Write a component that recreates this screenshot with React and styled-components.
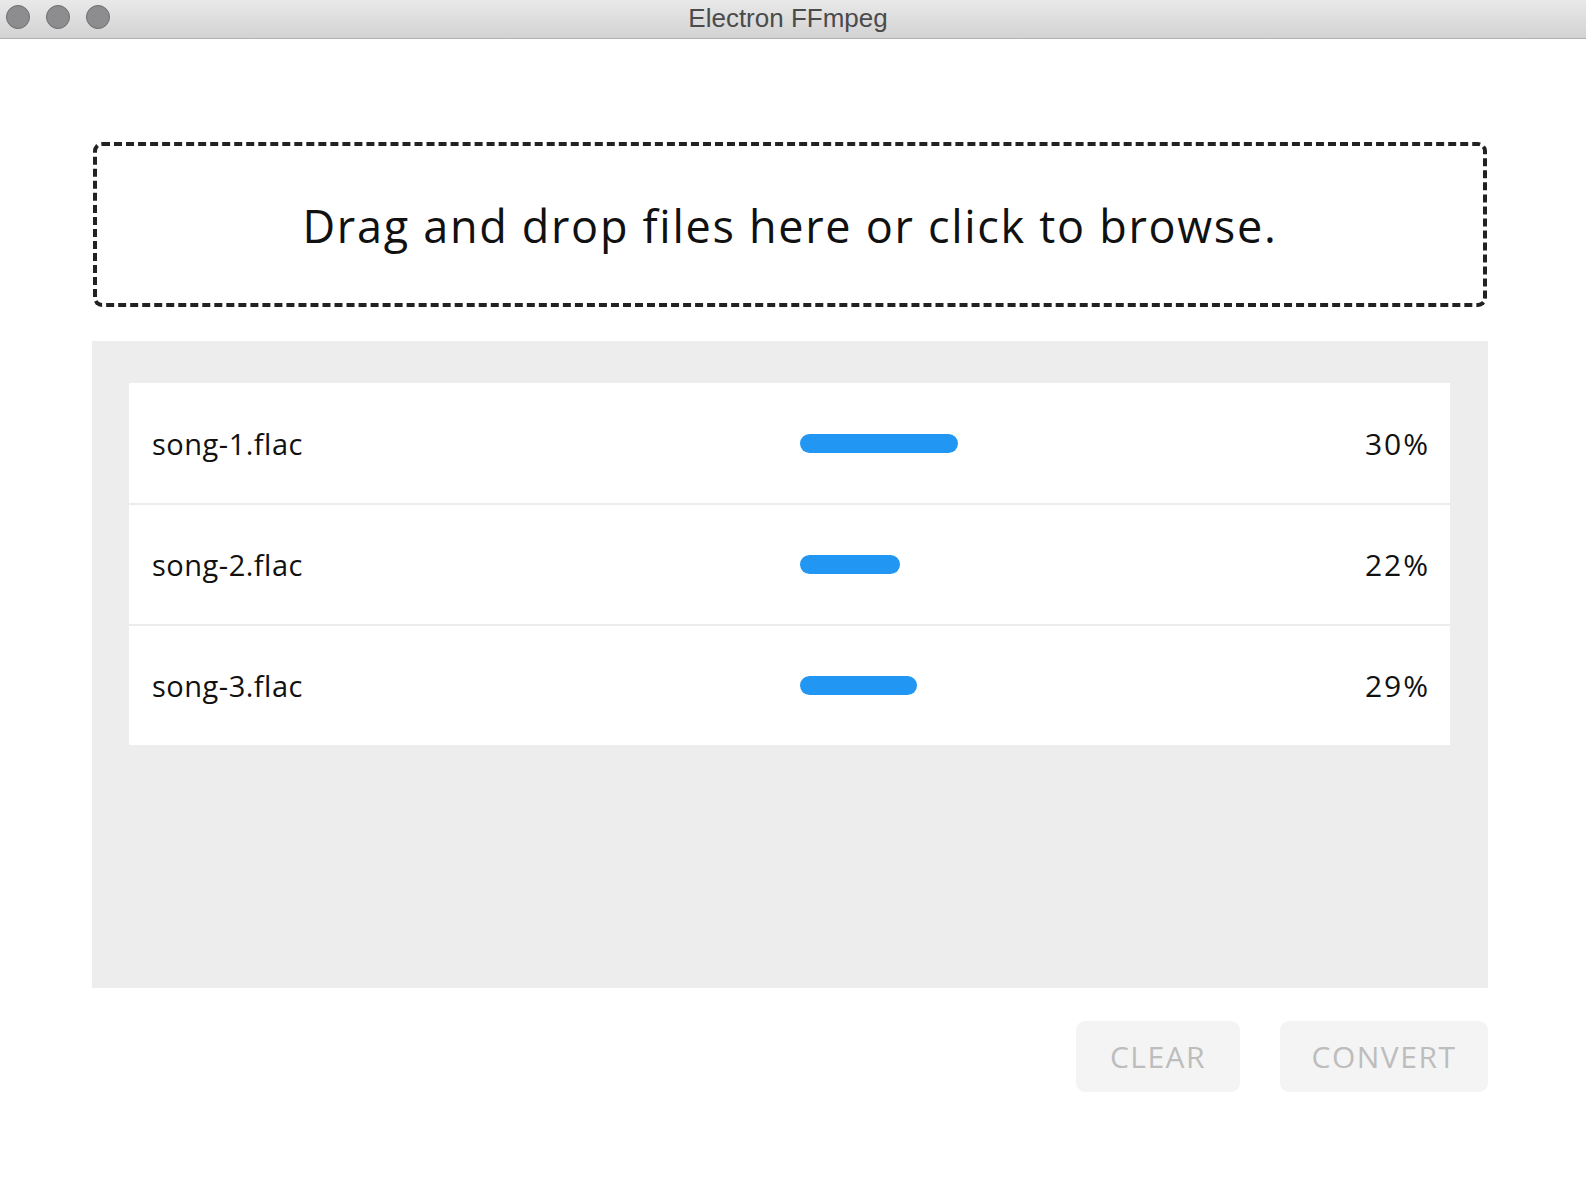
import React from "react";
import styled, { createGlobalStyle } from "styled-components";

const GlobalStyle = createGlobalStyle`
  html, body {
    margin: 0;
    padding: 0;
    background: #fff;
  }
  * {
    box-sizing: border-box;
  }
`;

const files = [
  { name: "song-1.flac", progress: 30, bar: 158 },
  { name: "song-2.flac", progress: 22, bar: 100 },
  { name: "song-3.flac", progress: 29, bar: 117 },
];

const App = () => {
  return (
    <Window>
      <GlobalStyle />
      <TitleBar>
        <Lights>
          <Light />
          <Light />
          <Light />
        </Lights>
        <Title>Electron FFmpeg</Title>
      </TitleBar>
      <Main>
        <DropZone>Drag and drop files here or click to browse.</DropZone>
        <Panel>
          <FileList>
            {files.map((f) => (
              <FileRow key={f.name}>
                <FileName>{f.name}</FileName>
                <BarTrack>
                  <Bar style={{ width: f.bar }} />
                </BarTrack>
                <Percent>{f.progress}%</Percent>
              </FileRow>
            ))}
          </FileList>
        </Panel>
        <Actions>
          <ActionButton disabled $w={164}>CLEAR</ActionButton>
          <ActionButton disabled $w={208}>CONVERT</ActionButton>
        </Actions>
      </Main>
    </Window>
  );
};

const Window = styled.div`
  width: 100%;
  min-height: 100vh;
  background: #fff;
  font-family: "Open Sans", "Noto Sans", sans-serif;
`;

const TitleBar = styled.div`
  position: relative;
  height: 39px;
  display: flex;
  align-items: center;
  justify-content: center;
  background: linear-gradient(#e9e9e9, #d2d2d2);
  border-bottom: 1px solid #b0b0b0;
`;

const Lights = styled.div`
  position: absolute;
  left: 6px;
  top: 5px;
  display: flex;
  gap: 16px;
`;

const Light = styled.span`
  width: 24px;
  height: 24px;
  border-radius: 50%;
  background: #8d8d90;
  border: 1px solid #6e6e72;
`;

const Title = styled.div`
  font-family: "Liberation Sans", Arial, sans-serif;
  font-size: 26px;
  color: #4b4b4b;
  margin-left: -10px;
  margin-top: -2px;
`;

const Main = styled.div`
  padding: 103px 98px 0 93px;
  display: flex;
  flex-direction: column;
`;

const DropZone = styled.div`
  height: 165px;
  margin-right: 1px;
  border: 4px dashed #222;
  border-radius: 9px;
  display: flex;
  align-items: center;
  justify-content: center;
  font-size: 45px;
  letter-spacing: 1.7px;
  color: #111;
  padding-top: 2px;
  cursor: pointer;
`;

const Panel = styled.div`
  margin-top: 34px;
  margin-left: -1px;
  height: 647px;
  background: #ededed;
  padding: 42px 38px 0 37px;
`;

const FileList = styled.div`
  background: #fff;
`;

const FileRow = styled.div`
  height: 121px;
  display: grid;
  grid-template-columns: 648px 1fr auto;
  align-items: center;
  padding: 0 22px 0 23px;
  border-top: 2px solid #ececec;
  &:first-child {
    border-top: none;
    height: 120px;
  }
`;

const FileName = styled.div`
  font-size: 29px;
  letter-spacing: 0.5px;
  color: #111;
`;

const BarTrack = styled.div`
  display: flex;
`;

const Bar = styled.div`
  height: 19px;
  border-radius: 10px;
  background: #2196f3;
`;

const Percent = styled.div`
  font-size: 30px;
  letter-spacing: 2px;
  margin-right: -2px;
  color: #111;
`;

const Actions = styled.div`
  margin-top: 33px;
  display: flex;
  justify-content: flex-end;
  gap: 40px;
`;

const ActionButton = styled.button`
  width: ${(p) => p.$w}px;
  height: 71px;
  padding: 0;
  border: none;
  border-radius: 9px;
  background: #f4f4f4;
  color: #bdbdbd;
  font-family: "Open Sans", "Noto Sans", sans-serif;
  font-size: 30px;
  letter-spacing: 1.5px;
  cursor: default;
`;

export default App;
